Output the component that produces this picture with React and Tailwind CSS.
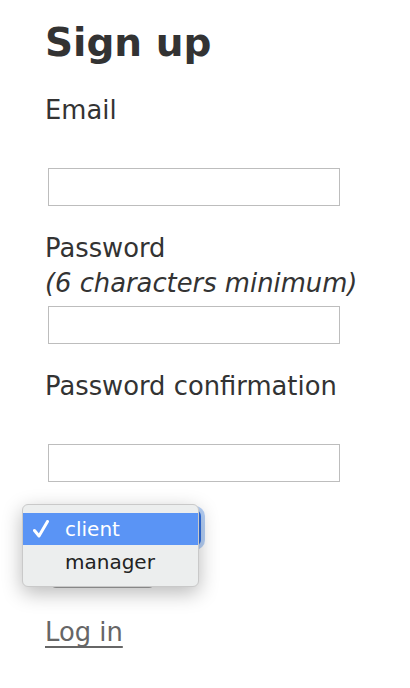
export default function App() {
  const font = { fontFamily: '"DejaVu Sans", Verdana, sans-serif' };
  return (
    <div className="relative min-h-[688px] w-[410px] bg-white text-[#333]" style={font}>
      <div className="px-[45px] pt-[20px]">
        <h1 className="text-[39px] font-bold leading-[46px] text-[#333]">Sign up</h1>

        <div className="mt-[27px] text-[25.8px] leading-[35px]">
          <div>Email</div>
          <div className="h-[35px]"></div>
          <div className="ml-[3px] mt-[5px] h-[38px] w-[292px] border border-[#bdbdbd] bg-white"></div>
        </div>

        <div className="mt-[25px] text-[25.8px] leading-[35px]">
          <div>Password</div>
          <div className="italic">(6 characters minimum)</div>
          <div className="ml-[3px] mt-[5px] h-[38px] w-[292px] border border-[#bdbdbd] bg-white"></div>
        </div>

        <div className="mt-[25px] text-[25.8px] leading-[35px]">
          <div>Password confirmation</div>
          <div className="h-[35px]"></div>
          <div className="ml-[3px] mt-[5px] h-[38px] w-[292px] border border-[#bdbdbd] bg-white"></div>
        </div>

        <div className="ml-[3px] mt-[28px] h-[36px] w-[153px] rounded-[6px] bg-[#2f6ee0] shadow-[0_0_0_4px_rgba(120,170,240,0.55)]"></div>

        <div className="ml-[5px] mt-[10px] h-[32px] w-[105px] rounded-[6px] border border-[#a9a9a9] bg-[#f6f6f6]"></div>

        <div className="mt-[27px] text-[25.8px] leading-[35px]">
          <a href="#" className="text-[#666] underline underline-offset-[5px] decoration-[1.5px]">Log in</a>
        </div>
      </div>

      <div className="absolute left-[22px] top-[504px] w-[177px] rounded-[6px] border border-[#c9c9c9] bg-[#eceeee] py-[8px] text-[20px] shadow-[0_6px_20px_rgba(0,0,0,0.28)]">
        <div className="flex h-[32px] items-center bg-[#5a94f5] text-white">
          <span className="flex w-[42px] items-center pl-[10px]">
            <svg width="16" height="18" viewBox="0 0 16 18" fill="none">
              <path d="M1.5 10.5 L6 16 L14.5 1.5" stroke="white" strokeWidth="3" strokeLinecap="round" strokeLinejoin="round" />
            </svg>
          </span>
          <span>client</span>
        </div>
        <div className="flex h-[33px] items-center text-[#222]">
          <span className="w-[42px]"></span>
          <span>manager</span>
        </div>
      </div>
    </div>
  );
}
